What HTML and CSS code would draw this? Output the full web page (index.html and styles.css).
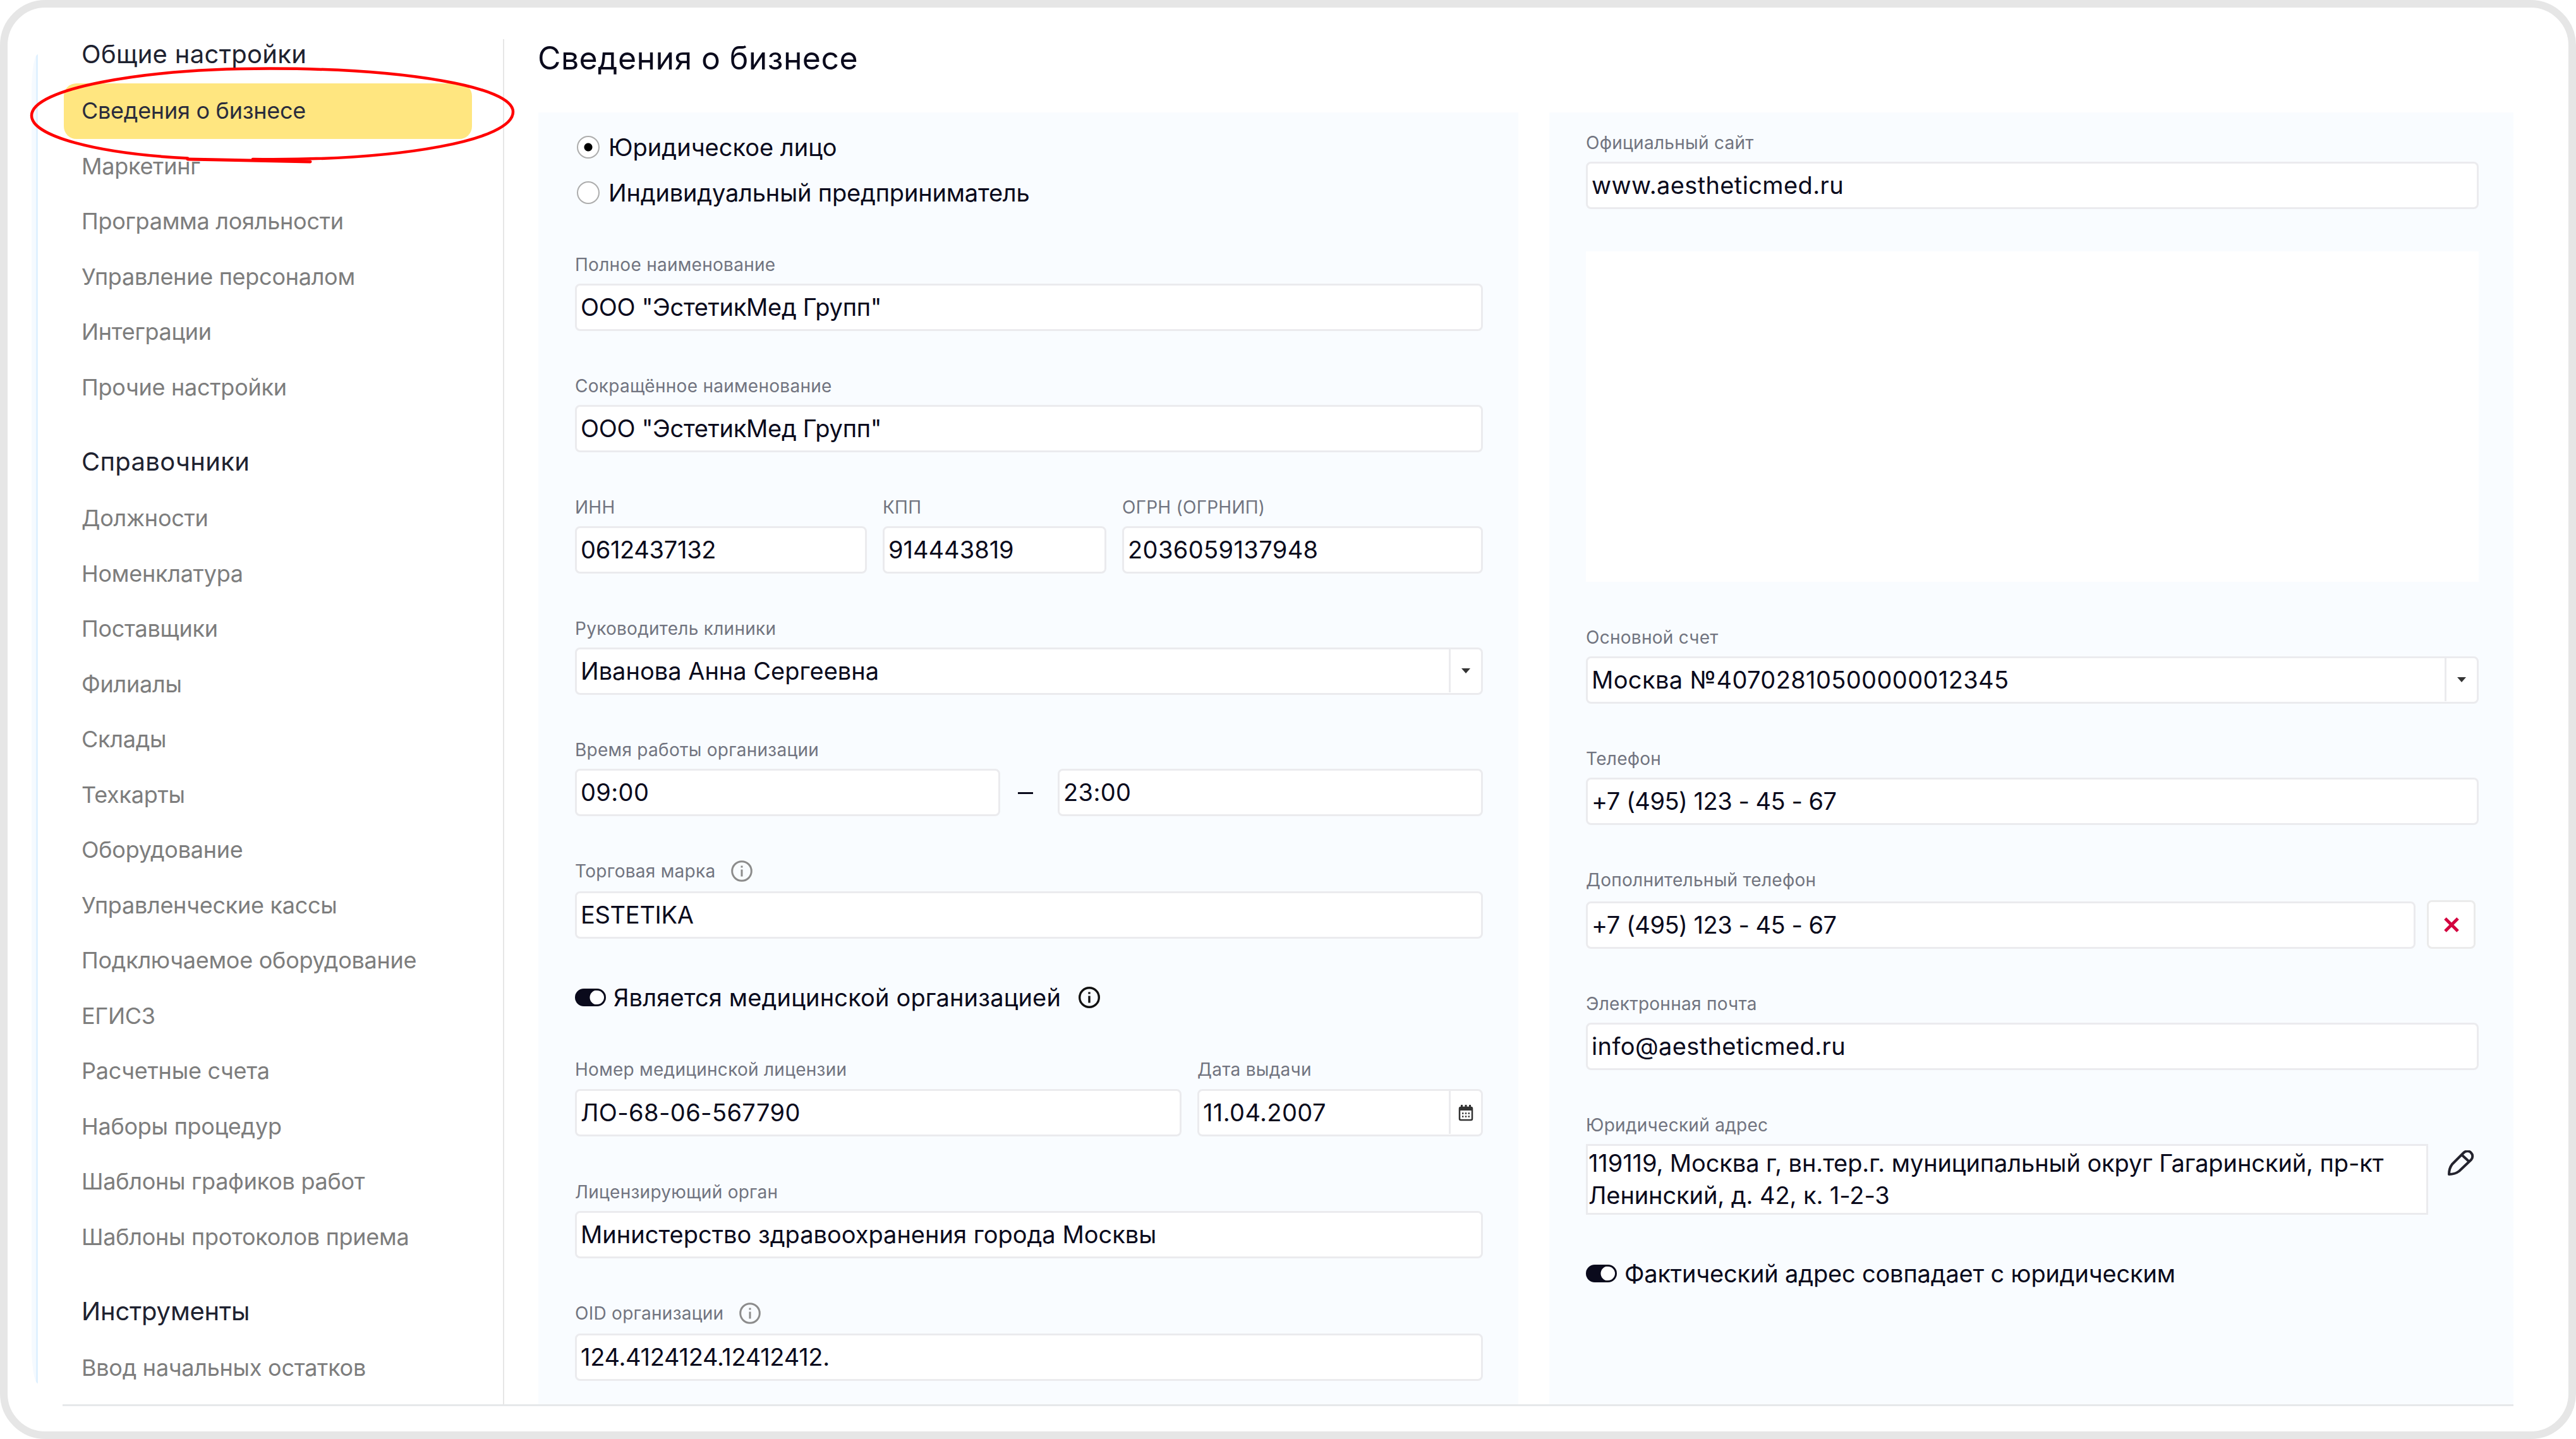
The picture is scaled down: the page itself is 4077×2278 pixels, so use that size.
FILE: index.html
```html
<!DOCTYPE html>
<html lang="ru">

<head>
    <meta charset="UTF-8">
    <meta name="viewport" content="width=device-width, initial-scale=1.0">
    <title>Сведения о бизнесе</title>
    <link rel="stylesheet" href="styles.css">
</head>

<body>

    <div class="window">
        <div class="edge"></div>

        <!-- Боковое меню -->
        <nav class="sidebar">
            <h3>Общие настройки</h3>
            <ul>
                <li class="active">Сведения о бизнесе</li>
                <li>Маркетинг</li>
                <li>Программа лояльности</li>
                <li>Управление персоналом</li>
                <li>Интеграции</li>
                <li>Прочие настройки</li>
            </ul>
            <h3>Справочники</h3>
            <ul>
                <li>Должности</li>
                <li>Номенклатура</li>
                <li>Поставщики</li>
                <li>Филиалы</li>
                <li>Склады</li>
                <li>Техкарты</li>
                <li>Оборудование</li>
                <li>Управленческие кассы</li>
                <li>Подключаемое оборудование</li>
                <li>ЕГИСЗ</li>
                <li>Расчетные счета</li>
                <li>Наборы процедур</li>
                <li>Шаблоны графиков работ</li>
                <li>Шаблоны протоколов приема</li>
            </ul>
            <h3 class="narrow">Инструменты</h3>
            <ul>
                <li>Ввод начальных остатков</li>
            </ul>
        </nav>

        <main class="content">
            <h1>Сведения о бизнесе</h1>

            <div class="panels">
                <!-- Основные данные -->
                <section class="panel panel-main">
                    <div class="radios">
                        <div class="radio"><span class="dot checked"></span>Юридическое лицо</div>
                        <div class="radio wide"><span class="dot"></span>Индивидуальный предприниматель</div>
                    </div>

                    <div class="field">
                        <div class="label">Полное наименование</div>
                        <div class="input tight">ООО "ЭстетикМед Групп"</div>
                    </div>

                    <div class="field">
                        <div class="label">Сокращённое наименование</div>
                        <div class="input tight">ООО "ЭстетикМед Групп"</div>
                    </div>

                    <div class="row row-codes">
                        <div class="field">
                            <div class="label">ИНН</div>
                            <div class="input tight">0612437132</div>
                        </div>
                        <div class="field">
                            <div class="label">КПП</div>
                            <div class="input">914443819</div>
                        </div>
                        <div class="field">
                            <div class="label">ОГРН (ОГРНИП)</div>
                            <div class="input loose">2036059137948</div>
                        </div>
                    </div>

                    <div class="field">
                        <div class="label">Руководитель клиники</div>
                        <div class="input">
                            <span class="value">Иванова Анна Сергеевна</span>
                            <span class="addon"><svg width="14" height="8" viewBox="0 0 14 8"><path d="M0 0h14L7 8z" fill="#333"/></svg></span>
                        </div>
                    </div>

                    <div class="field">
                        <div class="label">Время работы организации</div>
                        <div class="time">
                            <div class="input loose">09:00</div>
                            <span class="dash"></span>
                            <div class="input loose">23:00</div>
                        </div>
                    </div>

                    <div class="field with-info">
                        <div class="label">Торговая марка
                            <svg class="info" viewBox="0 0 34 34"><circle cx="17" cy="17" r="15.3"/><path d="M17 14.5v11M17 8.5v3"/></svg>
                        </div>
                        <div class="input tight">ESTETIKA</div>
                    </div>

                    <div class="switch">
                        <span class="toggle"></span>Является медицинской организацией
                        <svg class="info dark" viewBox="0 0 34 34"><circle cx="17" cy="17" r="15.3"/><path d="M17 14.5v11M17 8.5v3"/></svg>
                    </div>

                    <div class="row row-license">
                        <div class="field">
                            <div class="label">Номер медицинской лицензии</div>
                            <div class="input loose">ЛО-68-06-567790</div>
                        </div>
                        <div class="field">
                            <div class="label">Дата выдачи</div>
                            <div class="input loose">
                                <span class="value">11.04.2007</span>
                                <span class="addon">
                                    <svg width="24" height="27" viewBox="0 0 24 27">
                                        <rect x="2" y="5" width="20" height="20" rx="2" fill="none" stroke="#333" stroke-width="2.5"/>
                                        <path d="M2 5h20v5H2zM4 1h3v5H4zM10.5 1h3v5h-3zM17 1h3v5h-3z" fill="#333"/>
                                        <path d="M6 14.5h2.4m2.4 0h2.4m2.4 0H18M6 19.5h2.4m2.4 0h2.4m2.4 0H18" stroke="#333" stroke-width="2.4"/>
                                    </svg>
                                </span>
                            </div>
                        </div>
                    </div>

                    <div class="field">
                        <div class="label">Лицензирующий орган</div>
                        <div class="input">Министерство здравоохранения города Москвы</div>
                    </div>

                    <div class="field with-info">
                        <div class="label">OID организации
                            <svg class="info" viewBox="0 0 34 34"><circle cx="17" cy="17" r="15.3"/><path d="M17 14.5v11M17 8.5v3"/></svg>
                        </div>
                        <div class="input tight">124.4124124.12412412.</div>
                    </div>
                </section>

                <!-- Контакты -->
                <section class="panel panel-contacts">
                    <div class="field">
                        <div class="label">Официальный сайт</div>
                        <div class="input loose">www.aestheticmed.ru</div>
                    </div>

                    <div class="logo-box"></div>

                    <div class="field">
                        <div class="label">Основной счет</div>
                        <div class="input loose">
                            <span class="value">Москва №40702810500000012345</span>
                            <span class="addon"><svg width="14" height="8" viewBox="0 0 14 8"><path d="M0 0h14L7 8z" fill="#333"/></svg></span>
                        </div>
                    </div>

                    <div class="field">
                        <div class="label">Телефон</div>
                        <div class="input phone">+7 (495) 123 - 45 - 67</div>
                    </div>

                    <div class="field with-info">
                        <div class="label">Дополнительный телефон</div>
                        <div class="extra">
                            <div class="input phone">+7 (495) 123 - 45 - 67</div>
                            <div class="delete"><svg width="26" height="26" viewBox="0 0 26 26"><path d="M3 3l20 20M23 3L3 23" stroke="#d3043f" stroke-width="5"/></svg></div>
                        </div>
                    </div>

                    <div class="field">
                        <div class="label">Электронная почта</div>
                        <div class="input loose">info@aestheticmed.ru</div>
                    </div>

                    <div class="field">
                        <div class="label">Юридический адрес</div>
                        <div class="address">
                            <div class="address-text">119119, Москва г, вн.тер.г. муниципальный округ Гагаринский, пр-кт<br>Ленинский, д. 42, к. 1-2-3</div>
                            <svg class="pencil" viewBox="0 0 42 40"><path d="M2 38c0-6 2-12 5-16L25 4c4-4 10-3 12 0 3 3 3 8 0 11L18 33c-4 3-10 5-16 5zM22 7l12 11"/></svg>
                        </div>
                    </div>

                    <div class="switch switch-address">
                        <span class="toggle"></span>Фактический адрес совпадает с юридическим
                    </div>
                </section>
            </div>
        </main>

        <!-- Обводка активного пункта -->
        <svg class="marker" width="840" height="270" viewBox="0 0 840 270">
            <path d="M297 250.500C150 243 50 215 50 183C50 141 220 108.500 427 108.500C640 108.500 812 137 812 177C812 221 640 255 400 252"/>
            <path class="tail" d="M297 252C360 253 420 254.500 491 256"/>
        </svg>
    </div>

</body>

</html>
```
FILE: styles.css
```css
/* Общие стили */
* {
    box-sizing: border-box;
}

body {
    margin: 0;
    background-color: #fff;
    font-family: Inter, sans-serif;
    font-size: 38px;
    color: #0a0a1c;
}

h1,
h3,
ul {
    margin: 0;
    padding: 0;
    font-weight: 400;
    list-style: none;
}

/* Рамка окна */
.window {
    position: relative;
    display: flex;
    width: 4077px;
    height: 2278px;
    padding-left: 38px;
    border: 12px solid #e6e6e6;
    border-radius: 72px;
    background-color: #fff;
}

.edge {
    width: 10px;
    height: 2104px;
    margin-top: 74px;
    background-color: #f5faff;
    border-right: 3px solid #e0f1ff;
    border-radius: 10px 0 0 10px / 60px 0 0 60px;
}

/* Боковое меню */
.sidebar {
    position: relative;
    width: 738px;
    height: 2162px;
    margin-top: 50px;
    padding-left: 41px;
    padding-right: 49px;
    border-right: 2px solid #e6e6e6;
    white-space: nowrap;
}

.sidebar h3 {
    height: 90px;
    padding-left: 28px;
    font-size: 40px;
    line-height: 88px;
    letter-spacing: 0.3px;
    color: #1e2230;
}

.sidebar h3:first-child {
    margin-top: -20px;
}

.sidebar h3.narrow {
    letter-spacing: -0.2px;
}

.sidebar ul {
    margin-bottom: 30px;
}

.sidebar li {
    height: 87.5px;
    padding-left: 28px;
    font-size: 36px;
    line-height: 87px;
    letter-spacing: -0.27px;
    color: #7d7d7d;
}

.sidebar li.active {
    border-radius: 20px;
    background-color: #ffe680;
    color: #2a2c3c;
}

/* Содержимое */
.content {
    width: 3126px;
    margin-left: 54px;
}

.content h1 {
    height: 166px;
    padding-top: 50px;
    font-size: 50px;
    line-height: 60px;
    letter-spacing: 0.4px;
    text-indent: -1px;
}

.panels {
    position: relative;
    display: flex;
    gap: 49px;
    height: 2045px;
}

/* Нижняя линия под меню и панелями */
.panels::after {
    content: "";
    position: absolute;
    left: -753px;
    right: 0;
    top: 2045px;
    height: 3px;
    background-color: #e6e8ea;
}

.panel {
    padding: 0 56px 0 58px;
    background-color: #f9fcff;
}

.panel-main {
    width: 1551px;
    padding-top: 18.5px;
}

.panel-contacts {
    width: 1526px;
    padding-top: 27.5px;
    padding-right: 55px;
}

/* Переключатели */
.radios {
    margin-bottom: 57px;
}

.radio {
    display: flex;
    align-items: center;
    gap: 14px;
    height: 72.5px;
    padding-left: 3px;
}

.radio.wide {
    letter-spacing: -0.18px;
}

.dot {
    width: 36px;
    height: 36px;
    border: 2.5px solid #adadad;
    border-radius: 50%;
    background-color: #fff;
}

.dot.checked {
    background-image: radial-gradient(circle, #000 6px, transparent 7px);
}

.switch {
    display: flex;
    align-items: center;
    height: 40px;
    margin: 73px 0 74.5px;
    letter-spacing: 0.15px;
    white-space: nowrap;
}

.switch-address {
    letter-spacing: -0.18px;
}

.toggle {
    width: 49px;
    height: 28px;
    margin-right: 12px;
    border: 3px solid #0a0a1c;
    border-radius: 14px;
    background-color: #0a0a1c;
    background-image: radial-gradient(circle at 32px 11px, #fff 11px, transparent 12px);
}

/* Поля */
.field {
    margin-bottom: 67px;
}

.label {
    display: flex;
    align-items: center;
    height: 40px;
    margin-bottom: 10px;
    font-size: 28px;
    letter-spacing: 0.27px;
    color: #717480;
    white-space: nowrap;
}

.with-info .label {
    margin-bottom: 12px;
}

.input {
    display: flex;
    align-items: center;
    height: 75px;
    padding-left: 6px;
    padding-bottom: 1px;
    border: 3px solid #ebebee;
    border-radius: 8px;
    background-color: #fff;
    white-space: nowrap;
}

.tight {
    letter-spacing: -0.3px;
}

.loose {
    letter-spacing: 0.38px;
}

.phone {
    letter-spacing: -0.5px;
}

.value {
    flex: 1;
}

.addon {
    display: flex;
    align-items: center;
    justify-content: center;
    align-self: stretch;
    width: 51px;
    border-left: 3px solid #ebebee;
}

.row {
    display: grid;
    gap: 25px;
}

.row-codes {
    grid-template-columns: 462px 354px 571px;
}

.row-license {
    grid-template-columns: 960px 452px;
}

.row-license .field {
    margin-bottom: 68px;
}

.row-license .label {
    margin-bottom: 11px;
}

.time {
    display: flex;
    align-items: center;
}

.time .input {
    width: 673px;
}

.dash {
    width: 24px;
    height: 3px;
    margin: 3px 39px 0 28px;
    background-color: #0a0a1c;
}

.info {
    width: 34px;
    height: 34px;
    margin-left: 25px;
    fill: none;
    stroke: #8c8c8c;
    stroke-width: 3;
}

.info.dark {
    margin-left: 28px;
    stroke: #111;
    stroke-width: 3.4;
}

/* Правая панель */
.logo-box {
    height: 523px;
    margin-bottom: 68.5px;
    background-color: #fff;
}

.extra {
    display: flex;
    align-items: flex-end;
    gap: 18px;
}

.extra .input {
    width: 1313px;
}

.delete {
    display: flex;
    align-items: center;
    justify-content: center;
    width: 77px;
    height: 77px;
    border: 3px solid #ebebeb;
    border-radius: 8px;
    background-color: #fff;
}

.address {
    display: flex;
}

.address-text {
    width: 1333px;
    height: 112px;
    padding: 2px 0 0 1px;
    border: 3px solid #ebebee;
    background-color: #fff;
    line-height: 51px;
    letter-spacing: -0.1px;
    white-space: nowrap;
}

.pencil {
    width: 42px;
    height: 40px;
    margin: 10px 0 0 31px;
    fill: none;
    stroke: #23232e;
    stroke-width: 4;
    stroke-linejoin: round;
}

/* Красный овал */
.marker {
    position: absolute;
    left: -12px;
    top: -12px;
    fill: none;
    stroke: #f00;
    stroke-width: 4.5;
    stroke-linecap: round;
}

.marker .tail {
    stroke-width: 5;
}
```
